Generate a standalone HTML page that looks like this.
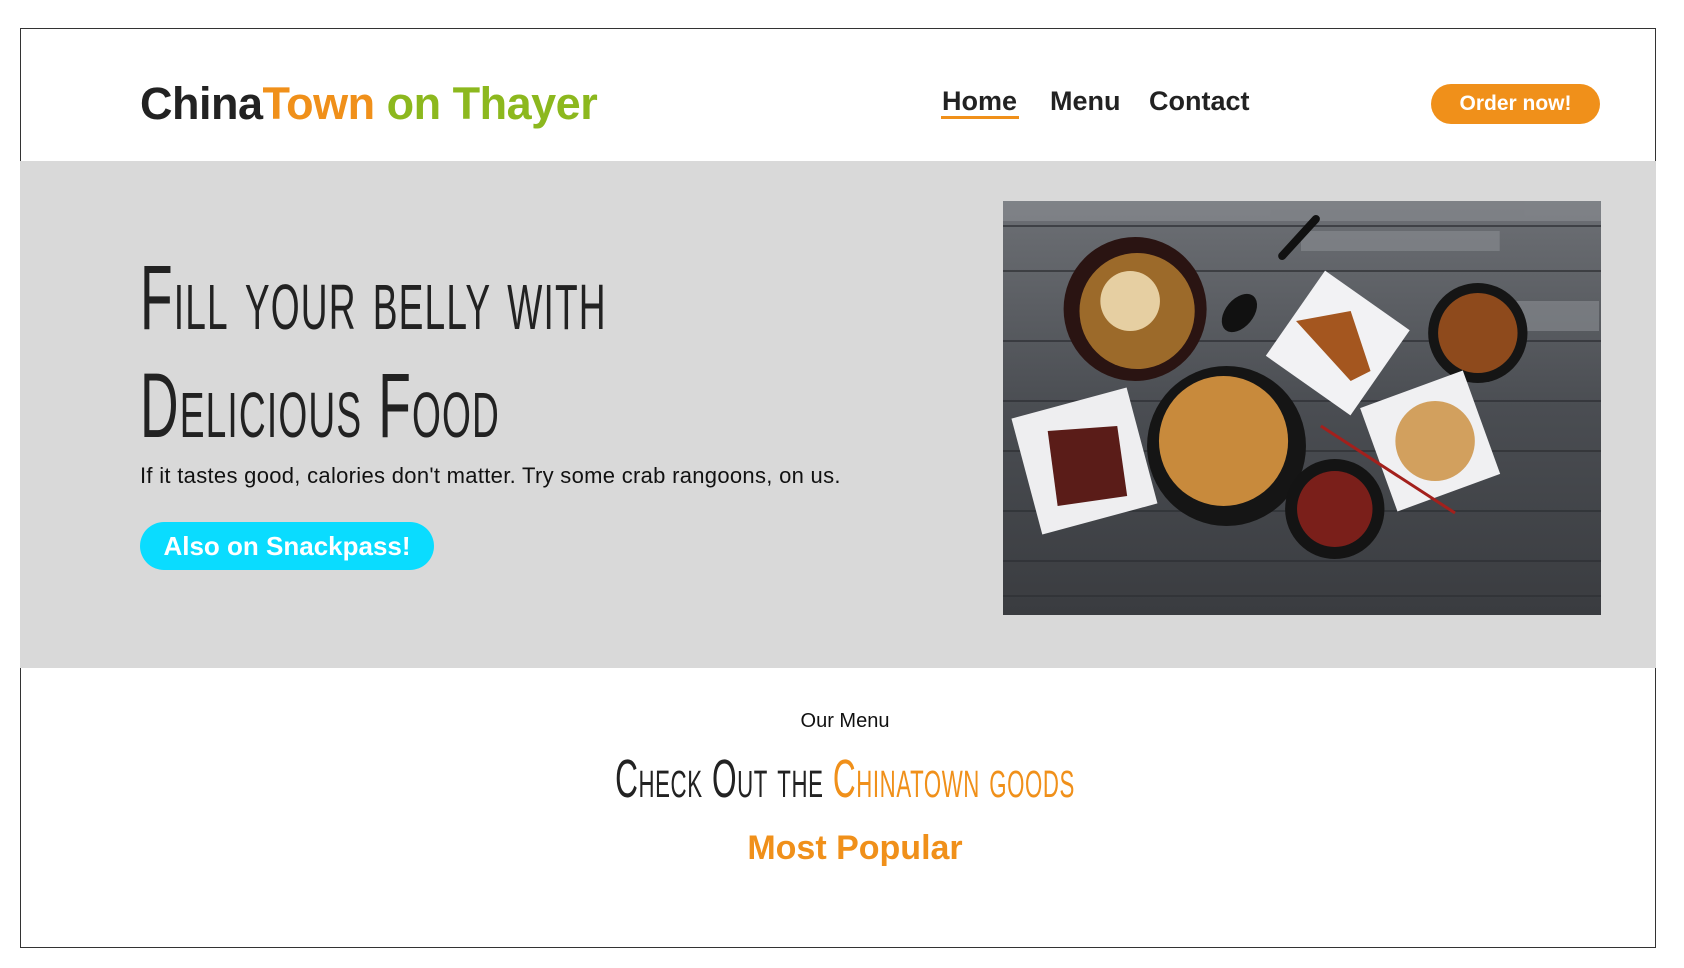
<!DOCTYPE html>
<html><head><meta charset="utf-8"><style>
*{margin:0;padding:0;box-sizing:border-box}
body{width:1684px;height:968px;background:#fff;position:relative;overflow:hidden;font-family:"Liberation Sans",sans-serif}
.frame{position:absolute;left:20px;top:28px;width:1636px;height:920px;border:1px solid #333}
.hero{position:absolute;left:20px;top:161px;width:1636px;height:507px;background:#d9d9d9}
.logo{position:absolute;left:140px;top:78px;font-size:45px;font-weight:bold;color:#222;white-space:nowrap;letter-spacing:-0.5px}
.nav{position:absolute;top:86px;font-size:27px;font-weight:bold;color:#222}
.btn{position:absolute;color:#fff;font-weight:bold;text-align:center;border-radius:30px}
.h{position:absolute;left:140px;font-size:92px;font-variant:small-caps;color:#222;white-space:nowrap;transform:scaleX(0.58);transform-origin:left top;font-weight:normal;letter-spacing:2px}
.c{position:absolute;left:0;width:1690px;text-align:center;white-space:nowrap}
</style></head><body>
<div class="frame"></div>
<div class="logo">China<span style="color:#f0901a">Town</span> <span style="color:#8cb81e">on Thayer</span></div>
<div class="nav" style="left:942px">Home</div>
<div style="position:absolute;left:941px;top:116px;width:78px;height:3px;background:#f0901a"></div>
<div class="nav" style="left:1050px">Menu</div>
<div class="nav" style="left:1149px">Contact</div>
<div class="btn" style="left:1431px;top:84px;width:169px;height:40px;background:#f0901a;font-size:21px;line-height:40px">Order now!</div>
<div class="hero"></div>
<div class="h" style="top:246px">Fill your belly with</div>
<div class="h" style="top:354px">Delicious Food</div>
<div style="position:absolute;left:140px;top:463px;font-size:22px;letter-spacing:0.3px;color:#111;white-space:nowrap">If it tastes good, calories don't matter. Try some crab rangoons, on us.</div>
<div class="btn" style="left:140px;top:522px;width:294px;height:48px;background:#0adcff;font-size:26px;line-height:48px;border-radius:26px">Also on Snackpass!</div>
<svg style="position:absolute;left:1003px;top:201px" width="598" height="414" viewBox="0 0 602 414" preserveAspectRatio="none">
<defs><linearGradient id="w" x1="0" y1="0" x2="0" y2="1"><stop offset="0" stop-color="#6d7075"/><stop offset=".5" stop-color="#4a4d52"/><stop offset="1" stop-color="#3a3c40"/></linearGradient></defs>
<rect width="602" height="414" fill="url(#w)"/>
<g stroke="#2e3034" stroke-width="2" opacity=".7"><line x1="0" y1="25" x2="602" y2="25"/><line x1="0" y1="70" x2="602" y2="70"/><line x1="0" y1="140" x2="602" y2="140"/><line x1="0" y1="200" x2="602" y2="200"/><line x1="0" y1="250" x2="602" y2="250"/><line x1="0" y1="310" x2="602" y2="310"/><line x1="0" y1="360" x2="602" y2="360"/><line x1="0" y1="395" x2="602" y2="395"/></g>
<g fill="#8a8d92" opacity=".6"><rect x="0" y="0" width="602" height="20"/><rect x="300" y="30" width="200" height="20"/><rect x="470" y="100" width="130" height="30"/></g>
<circle cx="133" cy="108" r="72" fill="#2a1412"/><circle cx="135" cy="110" r="58" fill="#9c6a2a"/><circle cx="128" cy="100" r="30" fill="#e6cfa2"/>
<path d="M281 55 L315 18" stroke="#111" stroke-width="8" stroke-linecap="round"/><ellipse cx="238" cy="112" rx="14" ry="22" fill="#111" transform="rotate(40 238 112)"/>
<rect x="285" y="90" width="104" height="104" fill="#f2f2f4" transform="rotate(35 337 142)"/><path d="M295 120 l55 -10 l20 60 l-20 10 z" fill="#a4561f"/>
<circle cx="478" cy="132" r="50" fill="#151515"/><circle cx="478" cy="132" r="40" fill="#8e4a1c"/>
<rect x="22" y="200" width="120" height="120" fill="#eeeef0" transform="rotate(-15 82 260)"/><path d="M45 230 l70 -5 l10 70 l-70 10 z" fill="#5a1c18"/>
<circle cx="225" cy="245" r="80" fill="#151515"/><circle cx="222" cy="240" r="65" fill="#c88a3c"/>
<rect x="375" y="185" width="110" height="110" fill="#f0f0f2" transform="rotate(-20 430 240)"/><circle cx="435" cy="240" r="40" fill="#d2a05e"/>
<circle cx="334" cy="308" r="50" fill="#141414"/><circle cx="334" cy="308" r="38" fill="#7a1f1a"/>
<path d="M320 225 L455 312" stroke="#a3201c" stroke-width="3"/>
</svg>
<div class="c" style="top:710px;font-size:20px;color:#111">Our Menu</div>
<div class="c" style="top:748px;height:60px"><span style="display:inline-block;font-size:54px;font-variant:small-caps;transform:scaleX(0.585);color:#222;letter-spacing:1px">Check Out the <span style="color:#f0901a">Chinatown goods</span></span></div>
<div class="c" style="top:829px;font-size:34px;font-weight:bold;color:#f0901a;width:1710px">Most Popular</div>
</body></html>
